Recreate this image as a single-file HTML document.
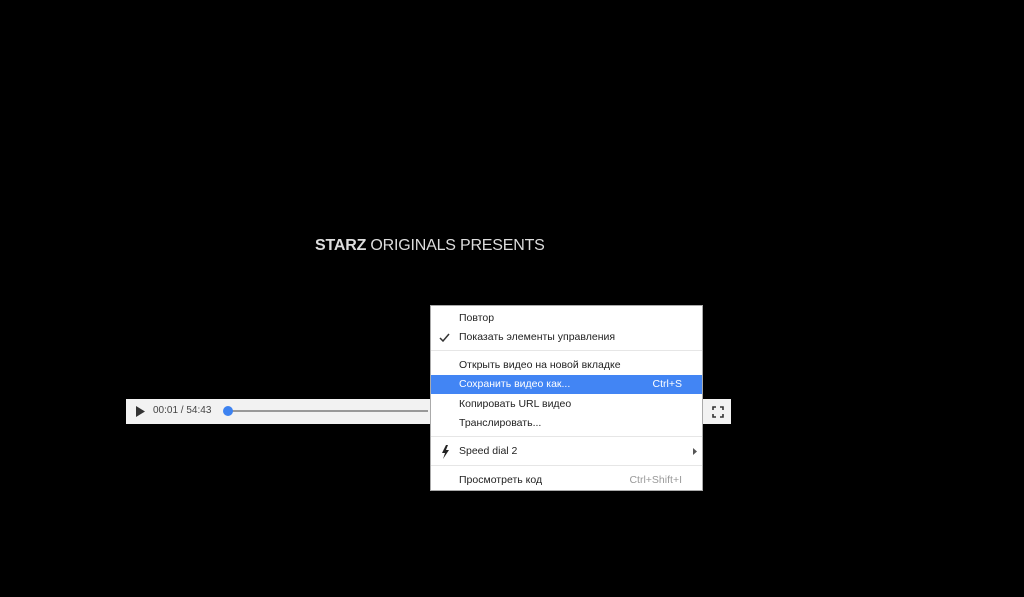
<!DOCTYPE html>
<html><head><meta charset="utf-8"><style>
body{margin:0;width:1024px;height:597px;background:#000;position:relative;overflow:hidden;font-family:"Liberation Sans","DejaVu Sans",sans-serif}
.t{position:absolute;left:315px;top:237px;color:#ddd;font-size:16px;letter-spacing:-0.2px;white-space:nowrap}
.bar{position:absolute;left:126px;top:399px;width:605px;height:25px;background:#f2f2f2}
.menu{position:absolute;left:430px;top:305px;width:273px;height:186px;background:#fff;border:1px solid #aaa;box-sizing:border-box;font-size:10.5px;color:#222}
.i{position:absolute;left:0;width:271px;height:19px;line-height:19px;padding-left:28px;box-sizing:border-box}
.s{position:absolute;left:0;width:271px;height:1px;background:#e6e6e6}
.k{position:absolute;right:20px;top:0}
</style></head><body>
<div class="t"><b>STARZ</b> ORIGINALS PRESENTS</div>
<div class="bar">
<svg style="position:absolute;left:9px;top:6px" width="12" height="13"><path d="M1 1L10 6.5L1 12Z" fill="#333"/></svg>
<span style="position:absolute;left:27px;top:6px;font-size:10px;color:#444">00:01 / 54:43</span>
<div style="position:absolute;left:102px;top:11px;width:200px;height:2px;background:#999"></div>
<div style="position:absolute;left:97px;top:7px;width:10px;height:10px;border-radius:50%;background:#3d82f0"></div>
<svg style="position:absolute;left:586px;top:7px" width="12" height="12" fill="none" stroke="#333" stroke-width="1.6"><path d="M1 4V1H4M8 1H11V4M11 8V11H8M4 11H1V8"/></svg>
</div>
<div class="menu">
<div class="i" style="top:3px">Повтор</div>
<div class="i" style="top:22px">Показать элементы управления</div>
<svg style="position:absolute;left:8px;top:27px" width="11" height="9"><path d="M1 5L4 8L10 1" stroke="#333" stroke-width="1.5" fill="none"/></svg>
<div class="s" style="top:44px"></div>
<div class="i" style="top:50px">Открыть видео на новой вкладке</div>
<div class="i" style="top:69px;background:#4285f4;color:#fff">Сохранить видео как...<span class="k">Ctrl+S</span></div>
<div class="i" style="top:89px">Копировать URL видео</div>
<div class="i" style="top:108px">Транслировать...</div>
<div class="s" style="top:130px"></div>
<svg style="position:absolute;left:10px;top:139px" width="9" height="14"><path d="M5 0L1 8H4L2 14L8 5H5L7 0Z" fill="#222"/></svg>
<div class="i" style="top:136px">Speed dial 2</div>
<svg style="position:absolute;left:262px;top:142px" width="5" height="7"><path d="M0 0L4 3.5L0 7Z" fill="#555"/></svg>
<div class="s" style="top:159px"></div>
<div class="i" style="top:165px">Просмотреть код<span class="k" style="color:#999">Ctrl+Shift+I</span></div>
</div>
</body></html>
